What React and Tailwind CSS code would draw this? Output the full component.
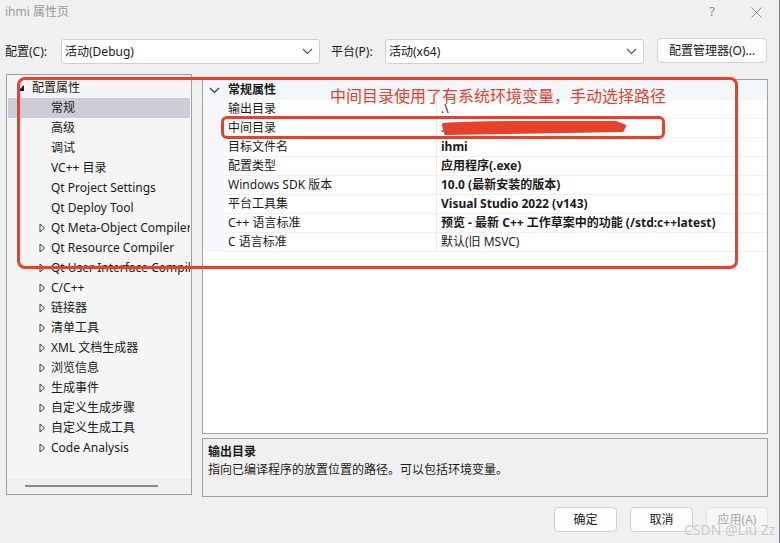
import React from "react";

const FONT = "font-['Noto_Sans','Noto_Sans_CJK_SC',sans-serif]";

function HollowTri() {
  return (
    <svg width="7" height="10" viewBox="0 0 7 10" className="shrink-0">
      <polygon points="1,1 5.5,5 1,9" fill="none" stroke="#3a3a3a" strokeWidth="1" />
    </svg>
  );
}

function Chevron({ color = "#555" }) {
  return (
    <svg width="11" height="7" viewBox="0 0 11 7">
      <polyline points="1,1 5.5,5.5 10,1" fill="none" stroke={color} strokeWidth="1.2" />
    </svg>
  );
}

const treeChildren = [
  { t: "常规", exp: false, sel: true },
  { t: "高级", exp: false },
  { t: "调试", exp: false },
  { t: "VC++ 目录", exp: false },
  { t: "Qt Project Settings", exp: false },
  { t: "Qt Deploy Tool", exp: false },
  { t: "Qt Meta-Object Compiler", exp: true },
  { t: "Qt Resource Compiler", exp: true },
  { t: "Qt User Interface Compiler", exp: true },
  { t: "C/C++", exp: true },
  { t: "链接器", exp: true },
  { t: "清单工具", exp: true },
  { t: "XML 文档生成器", exp: true },
  { t: "浏览信息", exp: true },
  { t: "生成事件", exp: true },
  { t: "自定义生成步骤", exp: true },
  { t: "自定义生成工具", exp: true },
  { t: "Code Analysis", exp: true },
];

const props = [
  { k: "输出目录", v: ".\\", b: false },
  { k: "中间目录", v: ".", b: false },
  { k: "目标文件名", v: "ihmi", b: true },
  { k: "配置类型", v: "应用程序(.exe)", b: true },
  { k: "Windows SDK 版本", v: "10.0 (最新安装的版本)", b: true },
  { k: "平台工具集", v: "Visual Studio 2022 (v143)", b: true },
  { k: "C++ 语言标准", v: "预览 - 最新 C++ 工作草案中的功能 (/std:c++latest)", b: true },
  { k: "C 语言标准", v: "默认(旧 MSVC)", b: false },
];

export default function App() {
  return (
    <div className={`relative w-[780px] h-[543px] overflow-hidden bg-[#f0f0f0] text-[12px] text-[#1a1a1a] ${FONT}`}>
      {/* right window edge */}
      <div className="absolute right-0 top-0 h-full w-[1px] bg-[#7c7c8c]" />

      {/* title bar */}
      <div className="flex h-[24px] items-center pl-[5px] pr-[18px]">
        <span className="text-[#9a9a9a]">ihmi 属性页</span>
        <div className="ml-auto flex items-center gap-[36px]">
          <span className="text-[13px] text-[#8a8a8a]">?</span>
          <svg width="11" height="11" viewBox="0 0 11 11">
            <path d="M0.5 0.5 L10.5 10.5 M10.5 0.5 L0.5 10.5" stroke="#8a8a8a" strokeWidth="1" />
          </svg>
        </div>
      </div>

      {/* config row */}
      <div className="mt-[15px] flex h-[25px] items-center pl-[5px]">
        <span className="w-[56px]">配置(C):</span>
        <div className="flex h-[25px] w-[259px] items-center justify-between rounded-[3px] border border-[#cfcfcf] bg-white pl-[3px] pr-[6px]">
          <span>活动(Debug)</span>
          <Chevron />
        </div>
        <span className="ml-[11px] w-[54px]">平台(P):</span>
        <div className="flex h-[25px] w-[259px] items-center justify-between rounded-[3px] border border-[#cfcfcf] bg-white pl-[3px] pr-[6px]">
          <span>活动(x64)</span>
          <Chevron />
        </div>
        <div className="ml-[13px] flex h-[25px] w-[110px] -translate-y-[1px] items-center justify-center rounded-[4px] border border-[#d0d0d0] bg-[#fdfdfd]">
          配置管理器(O)...
        </div>
      </div>

      {/* main area */}
      <div className="mt-[10px] flex items-start pl-[6px]">
        {/* tree */}
        <div className="flex h-[421px] w-[186px] shrink-0 flex-col overflow-hidden border border-[#a0a0a0] bg-[#f5f5f5]">
          <div className="flex-1 overflow-hidden pt-[3px]">
            <div className="relative flex h-[20px] items-center whitespace-nowrap">
              <svg width="6" height="6" viewBox="0 0 6 6" className="absolute left-[11px] top-[7px]">
                <polygon points="6,0 6,6 0,6" fill="#1e1e1e" />
              </svg>
              <span className="pl-[25px]">配置属性</span>
            </div>
            {treeChildren.map((c) => (
              <div
                key={c.t}
                className={`mx-[1px] flex h-[20px] items-center overflow-hidden whitespace-nowrap ${c.sel ? "bg-[#cdcdda]" : ""}`}
              >
                <div className="flex w-[43px] shrink-0 justify-end pr-[5px]">{c.exp ? <HollowTri /> : null}</div>
                <span className="shrink-0">{c.t}</span>
              </div>
            ))}
          </div>
          <div className="flex h-[17px] shrink-0 items-center border-t border-[#fafafa] bg-[#f0f0f0] pl-[18px]">
            <div className="h-[2px] w-[133px] bg-[#8a8a8a]" />
          </div>
        </div>

        {/* right column */}
        <div className="ml-[10px] flex w-[566px] flex-col pt-[5px]">
          {/* property grid */}
          <div className="h-[355px] border border-[#a0a0a0] bg-white">
            <div className="flex h-[20px] items-center bg-[#f3f6fb]">
              <div className="flex w-[21px] justify-center pl-[1px]">
                <Chevron color="#333" />
              </div>
              <span className="pl-[4px] font-bold">常规属性</span>
            </div>
            <div className="flex">
              <div className="w-[21px] bg-[#f5f7fb]" />
              <div className="flex-1">
                {props.map((p) => (
                  <div key={p.k} className="flex h-[19px] items-center border-b border-[#f0f0f0]">
                    <div className="flex h-full w-[213px] items-center border-r border-[#ececec] pl-[4px] whitespace-nowrap">
                      {p.k}
                    </div>
                    <div className={`pl-[4px] whitespace-nowrap ${p.b ? "font-bold" : ""}`}>{p.v}</div>
                  </div>
                ))}
              </div>
            </div>
          </div>

          {/* description */}
          <div className="mt-[4px] h-[59px] border border-[#a0a0a0] bg-[#f0f0f0] pl-[5px] pt-[4px] leading-[18px]">
            <div className="font-bold">输出目录</div>
            <div>指向已编译程序的放置位置的路径。可以包括环境变量。</div>
          </div>

          {/* buttons */}
          <div className="mt-[10px] flex justify-end gap-[13px]">
            <div className="flex h-[25px] w-[63px] items-center justify-center rounded-[4px] border border-[#d0d0d0] bg-[#fdfdfd]">确定</div>
            <div className="flex h-[25px] w-[63px] items-center justify-center rounded-[4px] border border-[#d0d0d0] bg-[#fdfdfd]">取消</div>
            <div className="flex h-[25px] w-[62px] items-center justify-center rounded-[4px] border border-[#e2e2e2] bg-[#f6f6f6] text-[#a8a8a8]">应用(A)</div>
          </div>
        </div>
      </div>

      {/* red annotations */}
      <div className="pointer-events-none absolute left-[17px] top-[77px] h-[192px] w-[721px] rounded-[8px] border-[3px] border-[#e8402a]" />
      <div className="pointer-events-none absolute left-[221px] top-[116px] h-[23px] w-[444px] rounded-[6px] border-[3px] border-[#e8402a]" />
      <div className="pointer-events-none absolute left-[330px] top-[85px] text-[16px] leading-[22px] text-[#e8402a]">
        中间目录使用了有系统环境变量，手动选择路径
      </div>
      <svg className="pointer-events-none absolute left-[440px] top-[119px]" width="190" height="18" viewBox="0 0 190 18">
        <path
          d="M4 6 C 40 3, 100 4, 176 4 L 184 7 L 182 11 C 130 12, 70 13, 6 14 Z"
          fill="#e8402a"
          stroke="#e8402a"
          strokeWidth="4"
          strokeLinejoin="round"
        />
      </svg>

      {/* watermark */}
      <div className="pointer-events-none absolute left-[684px] top-[519px] text-[14px] text-[#c8c8c8] [text-shadow:0_0_1px_#ffffff]">
        CSDN @Liu Zz
      </div>
    </div>
  );
}
